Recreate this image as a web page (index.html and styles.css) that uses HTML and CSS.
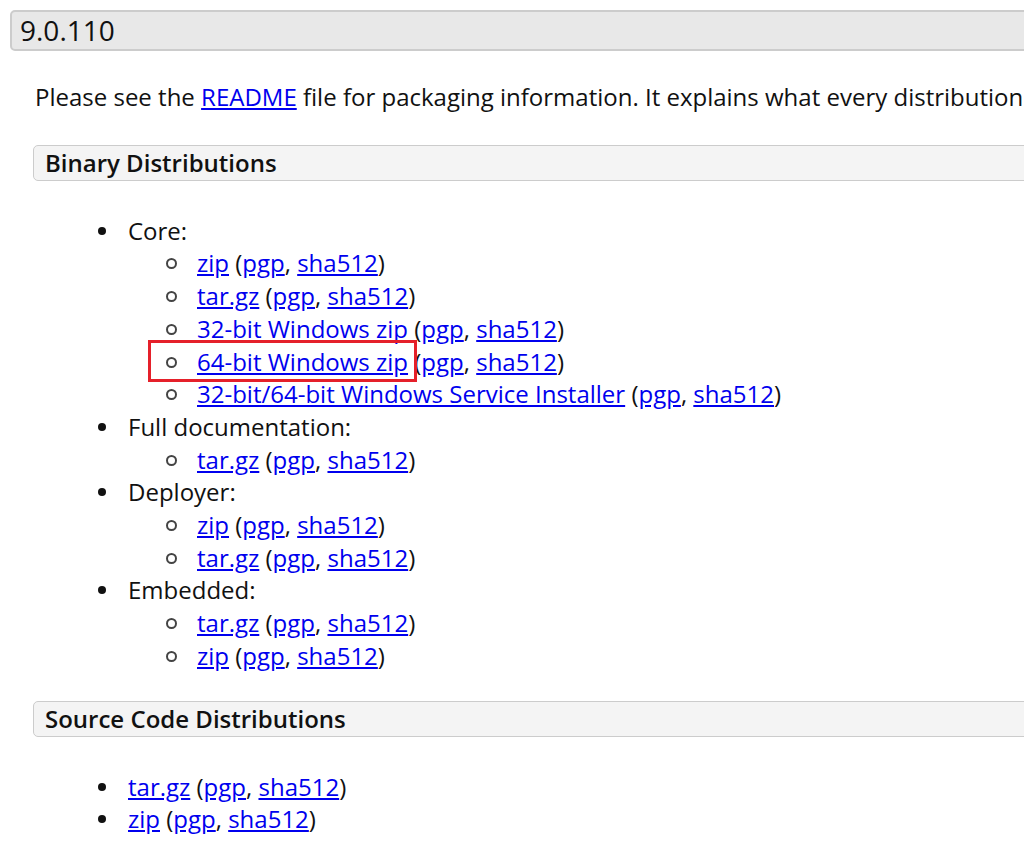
FILE: index.html
```html
<!DOCTYPE html>
<html>
<head>
<meta charset="utf-8">
<link rel="stylesheet" href="styles.css">
</head>
<body>
<div class="wrap">
  <h3 class="version">9.0.110</h3>
  <div class="section">
    <p class="intro">Please see the <a href="#">README</a> file for packaging information. It explains what every distribution contains.</p>
    <h4 class="dist">Binary Distributions</h4>
    <ul class="list">
      <li>Core:
        <ul class="sub">
          <li><a href="#">zip</a> (<a href="#">pgp</a>, <a href="#">sha512</a>)</li>
          <li><a href="#">tar.gz</a> (<a href="#">pgp</a>, <a href="#">sha512</a>)</li>
          <li><a href="#">32-bit Windows zip</a> (<a href="#">pgp</a>, <a href="#">sha512</a>)</li>
          <li class="marked"><span class="highlight"></span><a href="#">64-bit Windows zip</a> (<a href="#">pgp</a>, <a href="#">sha512</a>)</li>
          <li><a href="#">32-bit/64-bit Windows Service Installer</a> (<a href="#">pgp</a>, <a href="#">sha512</a>)</li>
        </ul>
      </li>
      <li>Full documentation:
        <ul class="sub">
          <li><a href="#">tar.gz</a> (<a href="#">pgp</a>, <a href="#">sha512</a>)</li>
        </ul>
      </li>
      <li>Deployer:
        <ul class="sub">
          <li><a href="#">zip</a> (<a href="#">pgp</a>, <a href="#">sha512</a>)</li>
          <li><a href="#">tar.gz</a> (<a href="#">pgp</a>, <a href="#">sha512</a>)</li>
        </ul>
      </li>
      <li>Embedded:
        <ul class="sub">
          <li><a href="#">tar.gz</a> (<a href="#">pgp</a>, <a href="#">sha512</a>)</li>
          <li><a href="#">zip</a> (<a href="#">pgp</a>, <a href="#">sha512</a>)</li>
        </ul>
      </li>
    </ul>
    <h4 class="dist">Source Code Distributions</h4>
    <ul class="list">
      <li><a href="#">tar.gz</a> (<a href="#">pgp</a>, <a href="#">sha512</a>)</li>
      <li><a href="#">zip</a> (<a href="#">pgp</a>, <a href="#">sha512</a>)</li>
    </ul>
  </div>
</div>
</body>
</html>
```
FILE: styles.css
```css
html, body {
  margin: 0;
  padding: 0;
  overflow: hidden;
  background: #fff;
}
body {
  font-family: "Open Sans", "DejaVu Sans", sans-serif;
  font-size: 24px;
  line-height: 32.7px;
  color: #111;
}
.wrap {
  width: 1400px;
  padding: 10px 0 0 10px;
}
a {
  color: #0000ee;
  text-decoration: underline;
}
.version {
  margin: 0;
  height: 37px;
  line-height: 37px;
  font-size: 28px;
  font-weight: 400;
  padding-left: 8px;
  background: #e8e8e8;
  border: 2px solid #cccccc;
  border-radius: 5px 0 0 5px;
}
.section {
  margin-left: 23px;
}
.intro {
  margin: 30px 0 31px 2px;
  white-space: nowrap;
}
.dist {
  margin: 0;
  height: 34px;
  line-height: 34px;
  font-size: 24px;
  font-weight: 600;
  padding-left: 11px;
  background: #f4f4f4;
  border: 1px solid #cccccc;
  border-radius: 5px 0 0 5px;
}
.list {
  margin: 34px 0 28px 0;
  padding-left: 95px;
  list-style: none;
}
.list > li {
  position: relative;
}
.list > li::before {
  content: "";
  position: absolute;
  left: -30px;
  top: 12px;
  width: 8px;
  height: 8px;
  border-radius: 50%;
  background: #111;
}
.sub {
  margin: 0;
  padding-left: 69px;
  list-style: none;
}
.sub > li {
  position: relative;
}
.sub > li::before {
  content: "";
  position: absolute;
  left: -31px;
  top: 11px;
  width: 7px;
  height: 7px;
  border-radius: 50%;
  border: 2px solid #444;
  background: #fff;
}
.highlight {
  position: absolute;
  left: -49px;
  top: -6px;
  width: 263px;
  height: 36px;
  border: 3px solid #e5202a;
}
```
